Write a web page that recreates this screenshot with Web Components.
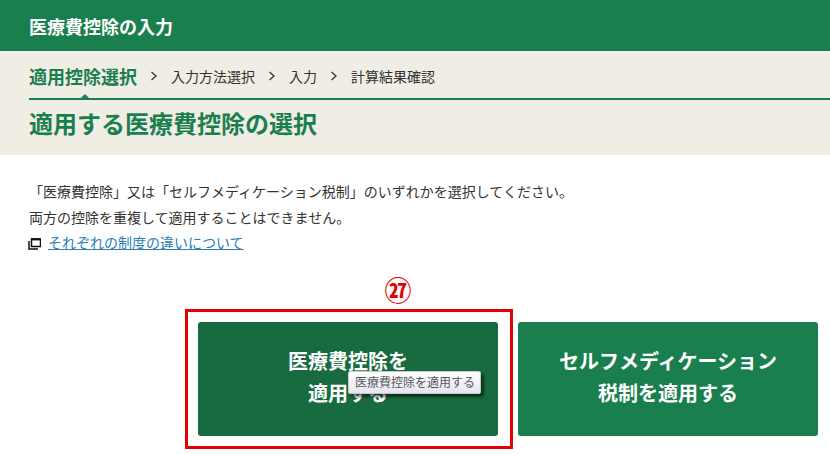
<!DOCTYPE html>
<html lang="ja">
<head>
<meta charset="utf-8">
<title>医療費控除の入力</title>
<style>
  html, body { margin: 0; padding: 0; background: #fff; }
  body {
    width: 830px;
    height: 454px;
    overflow: hidden;
    font-family: "Noto Sans CJK JP", "Liberation Sans", sans-serif;
    color: #333;
  }
</style>
</head>
<body>
<tax-page></tax-page>

<template id="tpl-header">
  <style>
    :host {
      display: flex;
      align-items: center;
      height: 51px;
      padding: 0 29px;
      box-sizing: border-box;
      background: #1a7f4e;
      color: #fff;
      font-size: 18px;
      font-weight: 700;
    }
  </style>
  <slot></slot>
</template>

<template id="tpl-steps">
  <style>
    :host {
      display: block;
      background: #f0ede4;
      height: 104px;
      padding-left: 29px;
      box-sizing: border-box;
    }
    .steps {
      display: flex;
      align-items: center;
      height: 47px;
      box-sizing: content-box;
      border-bottom: 2px solid #1a7f4e;
      position: relative;
      font-size: 14px;
      color: #333;
    }
    .steps > span { position: relative; top: 1px; }
    .current { font-size: 18px; font-weight: 700; color: #1a7f4e; }
    .steps > .sep { width: 34px; display: flex; justify-content: center; }
    .sep svg { display: block; }
    .mark {
      position: absolute;
      left: 52px;
      bottom: 0;
      width: 0;
      height: 0;
      border: 4px solid transparent;
      border-top-width: 0;
      border-bottom: 4px solid #1a7f4e;
    }
    h1 {
      margin: 0;
      height: 48px;
      padding-bottom: 4px;
      box-sizing: border-box;
      display: flex;
      align-items: center;
      font-size: 24px;
      font-weight: 700;
      color: #1a7f4e;
    }
  </style>
  <div class="steps">
    <span class="current">適用控除選択</span>
    <span class="sep"><svg width="8" height="10" viewBox="0 0 8 10"><path d="M1.5 1 6 5 1.5 9" fill="none" stroke="#333" stroke-width="1.3"/></svg></span>
    <span>入力方法選択</span>
    <span class="sep"><svg width="8" height="10" viewBox="0 0 8 10"><path d="M1.5 1 6 5 1.5 9" fill="none" stroke="#333" stroke-width="1.3"/></svg></span>
    <span>入力</span>
    <span class="sep"><svg width="8" height="10" viewBox="0 0 8 10"><path d="M1.5 1 6 5 1.5 9" fill="none" stroke="#333" stroke-width="1.3"/></svg></span>
    <span>計算結果確認</span>
    <i class="mark"></i>
  </div>
  <h1><slot></slot></h1>
</template>

<template id="tpl-intro">
  <style>
    :host {
      display: block;
      padding: 24px 29px 0;
      font-size: 14px;
      line-height: 25.5px;
      color: #333;
      text-spacing-trim: space-all;
    }
    p { margin: 0; }
    .link { display: flex; align-items: center; gap: 7px; margin-left: -1px; }
    a { color: #2a7db5; text-decoration: underline; }
    svg { display: block; flex: none; margin-top: 2px; }
  </style>
  <p>「医療費控除」又は「セルフメディケーション税制」のいずれかを選択してください。</p>
  <p>両方の控除を重複して適用することはできません。</p>
  <div class="link">
    <svg width="13" height="12" viewBox="0 0 13 12" fill="none" stroke="#111">
      <rect x="3.5" y="1" width="9" height="7.5" stroke-width="1.5"/>
      <path d="M3 1.3h9.5" stroke-width="2.2"/>
      <path d="M1 3v8h9" stroke-width="1.5"/>
    </svg>
    <a href="#">それぞれの制度の違いについて</a>
  </div>
</template>

<template id="tpl-button">
  <style>
    :host {
      display: flex;
      position: relative;
      width: 300px;
      height: 114px;
      padding-bottom: 3px;
      box-sizing: border-box;
      border-radius: 3px;
      background: #1a7f4e;
      color: #fff;
      align-items: center;
      justify-content: center;
      text-align: center;
      font-size: 20px;
      font-weight: 700;
      line-height: 32px;
    }
    :host([hover]) { background: #186b41; }
  </style>
  <div><slot></slot></div>
  <slot name="tip"></slot>
</template>

<template id="tpl-tooltip">
  <style>
    :host {
      position: absolute;
      left: 150px;
      top: 49px;
      height: 21px;
      padding: 0 5px 0 6px;
      display: flex;
      align-items: center;
      font-size: 12px;
      font-weight: 400;
      line-height: 1;
      white-space: nowrap;
      color: #575757;
      border: 1px solid #c8c8cc;
      border-radius: 2px;
      background: linear-gradient(#fff, #e5e5f0);
      box-shadow: 3px 3px 3px rgba(0, 0, 0, 0.55);
    }
  </style>
  <slot></slot>
</template>

<template id="tpl-page">
  <style>
    :host { display: block; position: relative; height: 454px; }
    .actions {
      display: flex;
      justify-content: flex-end;
      gap: 20px;
      padding: 66px 12px 0 0;
    }
    .frame {
      position: absolute;
      left: 185px;
      top: 309px;
      width: 322px;
      height: 134px;
      border: 3px solid #e60000;
      pointer-events: none;
    }
    .num {
      position: absolute;
      left: 383px;
      top: 275px;
      width: 30px;
      text-align: center;
      font-size: 27px;
      font-weight: 700;
      line-height: 30px;
      color: #e60000;
    }
  </style>
  <tax-header>医療費控除の入力</tax-header>
  <tax-steps>適用する医療費控除の選択</tax-steps>
  <tax-intro></tax-intro>
  <div class="actions">
    <tax-button hover>医療費控除を<br>適用する<tax-tooltip slot="tip">医療費控除を適用する</tax-tooltip></tax-button>
    <tax-button>セルフメディケーション<br>税制を適用する</tax-button>
  </div>
  <div class="frame"></div>
  <div class="num">㉗</div>
</template>

<script>
  // every element just clones its own template
  function define(tag, tplId) {
    customElements.define(tag, class extends HTMLElement {
      constructor() {
        super();
        const tpl = document.getElementById(tplId);
        this.attachShadow({ mode: 'open' }).appendChild(tpl.content.cloneNode(true));
      }
    });
  }

  define('tax-header', 'tpl-header');
  define('tax-steps', 'tpl-steps');
  define('tax-intro', 'tpl-intro');
  define('tax-button', 'tpl-button');
  define('tax-tooltip', 'tpl-tooltip');
  define('tax-page', 'tpl-page');
</script>
</body>
</html>
